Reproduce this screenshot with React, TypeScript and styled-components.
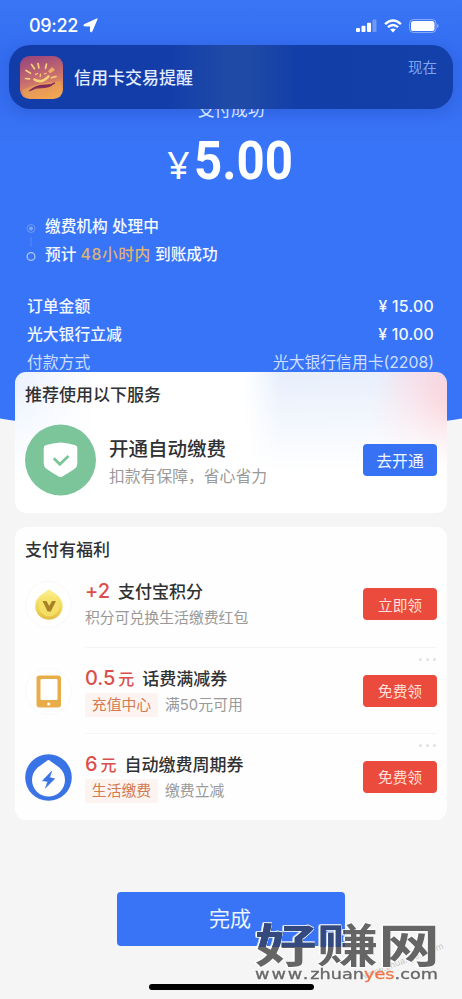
import React from "react";
import styled, { createGlobalStyle } from "styled-components";

const GlobalStyle = createGlobalStyle`
  * { box-sizing: border-box; }
  html, body { margin: 0; padding: 0; background: #f5f5f5; }
  body { font-family: Inter, "Noto Sans CJK SC", sans-serif; }
`;

const Screen = styled.main`
  position: relative;
  isolation: isolate;
  width: 462px;
  height: 999px;
  overflow: hidden;
  display: flex;
  flex-direction: column;
  background: #f5f5f5;
`;

const Backdrop = styled.div`
  position: absolute;
  z-index: -1;
  top: 0;
  left: -69px;
  width: 600px;
  height: 433px;
  background: linear-gradient(#3a75f6 0, #346df0 60px, #366ff2 110px, #3874f7 145px);
  border-radius: 0 0 50% 50% / 0 0 40px 40px;
`;

const StatusBar = styled.header`
  height: 45px;
  padding: 6px 22px 0 29px;
  display: flex;
  align-items: center;
  justify-content: space-between;
  color: #fff;
`;

const StatusGroup = styled.div<{ $gap: number }>`
  display: flex;
  align-items: center;
  gap: ${(p) => p.$gap}px;
`;

const Clock = styled.span`
  font-size: 18px;
  font-weight: 500;
  letter-spacing: -0.3px;
  line-height: 24px;
`;

const Notification = styled.section`
  height: 64px;
  margin: 0 9px;
  padding: 0 16px 0 11px;
  display: flex;
  align-items: center;
  border-radius: 21px;
  background: linear-gradient(90deg, #123ca8 0, #133eaa 36%, #1f4aa6 49%, #1f4aa6 54%, #123ea9 65%, #1440aa 100%);
  box-shadow: 0 3px 14px rgba(18, 50, 150, 0.22);
`;

const NotificationTitle = styled.strong`
  flex: 1;
  margin-left: 11px;
  padding-top: 1px;
  font-size: 17px;
  line-height: 24px;
  font-weight: 500;
  color: #e3edff;
`;

const NotificationTime = styled.time`
  align-self: flex-start;
  margin-top: 12px;
  font-size: 14.5px;
  line-height: 22px;
  color: #7fa4ee;
`;

const ResultClip = styled.div`
  height: 13px;
  overflow: hidden;
  display: flex;
  align-items: flex-end;
  justify-content: center;
  color: #d9e6ff;
  font-size: 16.7px;
  line-height: 24px;
`;

const Amount = styled.div`
  height: 80px;
  padding-top: 1px;
  display: flex;
  justify-content: center;
  align-items: baseline;
  gap: 4px;
  color: #fff;
`;

const Yen = styled.span`
  font: 400 39px/76px "Noto Sans", sans-serif;
`;

const AmountValue = styled.span`
  width: 101px;
  font: 700 53.5px/76px "DIN Alternate", Roboto, sans-serif;
  white-space: nowrap;
  transform: scaleX(0.92);
  transform-origin: 0 50%;
`;

const Steps = styled.ol`
  list-style: none;
  margin: 11px 0 0;
  padding: 0 0 0 26px;
  height: 80px;
`;

const Step = styled.li`
  display: flex;
  align-items: center;
  height: 28px;
  gap: 9px;
  font-size: 15.7px;
  line-height: 28px;
  font-weight: 500;
  color: #f4f8ff;
  white-space: pre;
`;

const StepText = styled.span``;

const Highlight = styled.span`
  color: #dfb273;
  letter-spacing: 0.6px;
`;

const Bill = styled.dl`
  margin: 0;
  padding: 0 28px 0 27px;
  height: 79px;
`;

const BillRow = styled.div<{ $light?: boolean }>`
  display: flex;
  justify-content: space-between;
  height: 28px;
  line-height: 28px;
  font-size: 15.8px;
  font-weight: ${(p) => (p.$light ? 400 : 500)};
  color: ${(p) => (p.$light ? "#cfdfff" : "#f2f7ff")};
`;

const BillLabel = styled.dt``;

const BillValue = styled.dd<{ $spaced: boolean }>`
  margin: 0;
  letter-spacing: ${(p) => (p.$spaced ? 0.25 : 0)}px;
`;

const Card = styled.section<{ $glow?: boolean }>`
  position: relative;
  margin: 0 15px 14px;
  padding: 10px 10px 0;
  height: ${(p) => (p.$glow ? 141 : 293)}px;
  border-radius: 11px;
  background: ${(p) =>
    p.$glow
      ? `linear-gradient(180deg, rgba(255,255,255,0) 0, #fff 100px),
         radial-gradient(ellipse 75px 105px at 100% 38px, #f8c6d0 0, rgba(250,215,225,0.75) 45%, rgba(255,255,255,0) 100%),
         linear-gradient(90deg, #e9f0ff 0, #fff 80px, #fff 230px, #e7effc 265px, #e9effb 100%)`
      : "#fefefe"};
`;

const CardTitle = styled.h2`
  margin: 0;
  padding-top: 0.5px;
  font-size: 17px;
  line-height: 24px;
  font-weight: 500;
  color: #303133;
`;

const ServiceRow = styled.div`
  margin-top: 17px;
  height: 73px;
  display: flex;
  align-items: center;
`;

const ServiceText = styled.div`
  flex: 1;
  margin-left: 13px;
  padding-top: 3px;
`;

const ServiceName = styled.div`
  font-size: 19.5px;
  line-height: 28px;
  font-weight: 500;
  color: #303133;
`;

const ServiceHint = styled.div`
  margin-top: 2px;
  font-size: 15.8px;
  line-height: 24px;
  color: #999;
`;

const ActionButton = styled.button<{ $tone: "blue" | "red" }>`
  flex: none;
  width: 74px;
  height: 32px;
  padding: 3px 0 0;
  border: 0;
  border-radius: 4px;
  font-family: inherit;
  font-size: ${(p) => (p.$tone === "blue" ? 15.8 : 14.7)}px;
  line-height: 24px;
  color: ${(p) => (p.$tone === "blue" ? "#f1f6ff" : "#ffe0dc")};
  background: ${(p) => (p.$tone === "blue" ? "#3672f3" : "#ea4b3c")};
`;

const OfferRow = styled.div`
  height: 86.4px;
  display: flex;
  align-items: center;
`;

const OfferBody = styled.div<{ $divided: boolean }>`
  flex: 1;
  height: 100%;
  margin-left: 13px;
  display: flex;
  align-items: center;
  border-bottom: 1px solid ${(p) => (p.$divided ? "#f5f5f5" : "transparent")};
`;

const OfferText = styled.div`
  flex: 1;
  padding-bottom: 1px;
`;

const OfferTitle = styled.div`
  display: flex;
  align-items: baseline;
  height: 29px;
  font-size: 17px;
  line-height: 28px;
  font-weight: 500;
  color: #303133;
`;

const Reward = styled.span`
  margin-right: 8px;
  color: #dc4e4b;
  font-size: 20px;
  letter-spacing: -0.1px;
`;

const RewardUnit = styled.span`
  margin-left: 3px;
  font-size: 16px;
`;

const OfferDetail = styled.div`
  display: flex;
  align-items: center;
  height: 24px;
  font-size: 14.85px;
  line-height: 24px;
  color: #999;
`;

const Tag = styled.span`
  width: 73px;
  margin-right: 7px;
  text-align: center;
  background: #fdf4f1;
  color: #d5794e;
`;

const OfferAction = styled.div`
  position: relative;
  display: flex;
`;

const MoreDots = styled.div`
  position: absolute;
  right: 1px;
  top: -17px;
  display: flex;
  gap: 4px;
`;

const Dot = styled.i`
  width: 3px;
  height: 3px;
  border-radius: 50%;
  background: #e2e2e2;
`;

const Footer = styled.footer`
  flex: 1;
  padding-top: 58px;
  display: flex;
  flex-direction: column;
  align-items: center;
`;

const DoneButton = styled.button`
  width: 228px;
  height: 54px;
  padding: 0 2px 4px 0;
  border: 0;
  border-radius: 4px;
  background: #3874f5;
  color: #ecf4ff;
  font: 400 21px/30px "Noto Sans CJK SC", sans-serif;
`;

const HomeIndicator = styled.div`
  margin-top: 38px;
  width: 165px;
  height: 5.5px;
  border-radius: 3px;
  background: #000;
`;

const Watermark = styled.div`
  position: absolute;
  left: 255px;
  top: 918px;
  width: 186px;
`;

const WatermarkName = styled.div`
  height: 49px;
  width: 138px;
  font: 700 46px/49px "Noto Sans CJK SC", sans-serif;
  transform: scaleX(1.34);
  transform-origin: 0 0;
  white-space: nowrap;
  filter: drop-shadow(0.7px 0 0 rgba(255, 255, 255, 0.8)) drop-shadow(-0.7px 0 0 rgba(255, 255, 255, 0.8))
    drop-shadow(0 1px 0 rgba(255, 255, 255, 0.8)) drop-shadow(0 -1px 0 rgba(255, 255, 255, 0.8));
`;

const WatermarkInk = styled.span`
  background: linear-gradient(#34497e, #34497e) 0 0 / 67.2px 38px no-repeat, #656565;
  -webkit-background-clip: text;
  background-clip: text;
  color: transparent;
`;

const WatermarkUrl = styled.div`
  margin-top: 1px;
  font: 400 13.4px/14px "DejaVu Sans", sans-serif;
  color: #686868;
  -webkit-text-stroke: 0.3px currentColor;
  transform: scaleX(1.32);
  transform-origin: 0 0;
  white-space: nowrap;
`;

const UrlPrefix = styled.span`
  letter-spacing: 1.5px;
`;

const Accent = styled.span`
  color: #f27445;
`;

const Stamp = styled.div`
  position: absolute;
  left: 360px;
  top: 956px;
  font-size: 9px;
  line-height: 10px;
  color: rgba(120, 120, 120, 0.4);
  transform: rotate(-21deg);
  white-space: nowrap;
`;

const LocationArrow = () => (
  <svg width="15" height="15" viewBox="0 0 15 15">
    <path d="M14.200.8 8.800 13.600Q8 14.600 7.500 13.400V7.900H1.300Q.2 7.300 1.300 6.600Z" fill="#fff" stroke="#fff" strokeWidth="1" strokeLinejoin="round" />
  </svg>
);

const Signal = () => (
  <svg width="21" height="14" viewBox="0 0 21 14" fill="#fff">
    <rect x="0" y="9" width="4" height="4" rx="1" />
    <rect x="5.5" y="6.8" width="4" height="6.2" rx="1" />
    <rect x="11" y="3.8" width="4" height="9.2" rx="1" />
    <rect x="16.5" y="0.5" width="4" height="12.5" rx="1" opacity=".28" />
  </svg>
);

const Wifi = () => (
  <svg width="18" height="14" viewBox="0 0 18 14" fill="none" stroke="#fff">
    <path d="M1.1 5.1Q9-2.2 16.9 5.1" strokeWidth="2.5" />
    <path d="M3.9 8.2Q9 3.7 14.1 8.2" strokeWidth="2.3" />
    <path d="M6.2 10.6Q9 8.2 11.8 10.6L9 13.4Z" fill="#fff" stroke="none" />
  </svg>
);

const Battery = () => (
  <svg width="31" height="14" viewBox="0 0 31 14">
    <rect x=".5" y=".5" width="26.5" height="13" rx="4" fill="none" stroke="#fff" opacity=".4" />
    <rect x="2" y="2" width="23.5" height="10" rx="2.6" fill="#fff" />
    <path d="M28.2 5v4q1.300-.6 1.300-2t-1.300-2Z" fill="#fff" opacity=".5" />
  </svg>
);

const BankLogo = () => (
  <svg width="43" height="43" viewBox="0 0 43 43">
    <defs>
      <linearGradient id="bank" x1=".3" y1="0" x2=".6" y2="1">
        <stop offset="0" stopColor="#9a477c" />
        <stop offset=".5" stopColor="#c66b70" />
        <stop offset="1" stopColor="#f3a651" />
      </linearGradient>
    </defs>
    <rect width="43" height="43" rx="9.500" fill="url(#bank)" />
    <path d="M2 34q15-8 39-9v9q-1 8-9 8H11q-7 0-9-8Z" fill="#eca552" opacity=".6" />
    <g fill="none" stroke="#f8d178" strokeLinecap="round" strokeWidth="1.700">
      <path d="m5.500 22.500 4 .4M6 14.500l4.500 2.800M11.500 8.500l3 4.300M18 7.500l.9 4.500M26.500 8l-1 4.300M36 20.500l-4.500 1.300" />
      <path d="M14.500 23.500q7 4.500 14-3.200" strokeWidth="2.500" />
      <path d="m15.500 18.500 2-1M20.500 18l-.4 2.600M24.300 18l1.800-.8" strokeWidth="1.200" />
    </g>
    <path d="m28 15 4-4 3 3-5 3.500Z" fill="#edae62" />
    <path d="M9.500 34.800q6.500-5.800 15.200-5.700 6 .3 10.300-2.300-5 5-11.700 4.800Q16 31 9.500 34.800Z" fill="#7d295c" stroke="#7d295c" />
  </svg>
);

const StepMark = ({ current = false }: { current?: boolean }) => (
  <svg width="10" height="28" viewBox="0 0 10 28" fill="none" stroke="#a9c5fd">
    {current ? (
      <>
        <circle cx="5" cy="15.5" r="4" strokeOpacity=".45" />
        <circle cx="5" cy="15.5" r="2" fill="#a9c5fd" stroke="none" opacity=".65" />
        <path d="M5 24v4" strokeOpacity=".3" />
      </>
    ) : (
      <>
        <path d="M5 0v6" strokeOpacity=".3" />
        <circle cx="5" cy="15.5" r="3.900" strokeWidth="1.300" />
      </>
    )}
  </svg>
);

const ShieldIcon = () => (
  <svg width="71" height="72" viewBox="0 0 71 72">
    <circle cx="35.500" cy="36" r="35.500" fill="#7cc59b" />
    <path d="M35.500 18.500q8 .8 14.800 2.800 2 .7 2 2.800V39.500q0 3.500-3 5.600-5 3.600-12 7.300-1.800 1-3.600 0-7-3.700-12-7.300-3-2.100-3-5.600V24.100q0-2.100 2-2.800Q27.500 19.300 35.500 18.500Z" fill="#fff" />
    <path d="m28.800 34.300 6 6 8.700-8.300" fill="none" stroke="#7cc59b" strokeWidth="2.800" />
  </svg>
);

const PointsIcon = () => (
  <svg width="47" height="47" viewBox="0 0 47 47">
    <defs>
      <linearGradient id="coin" x1="0" y1="0" x2="0" y2="1">
        <stop offset="0" stopColor="#fbf194" />
        <stop offset=".6" stopColor="#f1d856" />
        <stop offset="1" stopColor="#e3bd48" />
      </linearGradient>
    </defs>
    <circle cx="23.500" cy="23.500" r="22.800" fill="#fff" stroke="#f8f8f8" />
    <path d="M24 8.500q1 0 2.200 1.200l6 4.300Q37.600 18.500 37.600 25a13.700 13.700 0 0 1-27.400 0q0-6.500 5.600-11l6-4.300Q23 8.500 24 8.500Z" fill="url(#coin)" />
    <circle cx="24" cy="25" r="10.300" fill="#f6e36c" opacity=".8" />
    <path d="m17.500 20h4l2.700 5 2.800-5h4l-5.200 10.500h-3.200Z" fill="#a98227" />
  </svg>
);

const PhoneIcon = () => (
  <svg width="47" height="47" viewBox="0 0 47 47">
    <circle cx="23.500" cy="23.500" r="22.800" fill="#fff" stroke="#f9f9f9" />
    <rect x="11.500" y="7.500" width="24.500" height="32" rx="3" fill="#e8ad49" />
    <rect x="15.500" y="11" width="17" height="21" rx="1" fill="#fff" />
    <circle cx="23.700" cy="36" r="1.600" fill="#fff" />
  </svg>
);

const EnergyIcon = () => (
  <svg width="47" height="47" viewBox="0 0 47 47">
    <circle cx="23.500" cy="23.500" r="23.300" fill="#3973e5" />
    <path d="M23.500 6q1.200 0 2.500 1.500l8 5.800Q40 18.500 40 26a16.500 16.500 0 0 1-33 0q0-7.500 6-12.700l8-5.800Q22.300 6 23.500 6Z" fill="#fff" />
    <path d="m26.800 17-9.300 9.700 5.300.8-2.400 6.500 9.300-9.200-5.100-1.300Z" fill="#3973e5" stroke="#3973e5" strokeWidth=".6" strokeLinejoin="round" />
  </svg>
);

type Offer = {
  icon: React.ReactNode;
  reward: string;
  unit?: string;
  title: string;
  tag?: string;
  detail: string;
  action: string;
};

const offers: Offer[] = [
  { icon: <PointsIcon />, reward: "+2", title: "支付宝积分", detail: "积分可兑换生活缴费红包", action: "立即领" },
  { icon: <PhoneIcon />, reward: "0.5", unit: "元", title: "话费满减券", tag: "充值中心", detail: "满50元可用", action: "免费领" },
  { icon: <EnergyIcon />, reward: "6", unit: "元", title: "自动缴费周期券", tag: "生活缴费", detail: "缴费立减", action: "免费领" },
];

const bill = [
  { label: "订单金额", value: "¥ 15.00" },
  { label: "光大银行立减", value: "¥ 10.00" },
  { label: "付款方式", value: "光大银行信用卡(2208)", light: true },
];

export default function App() {
  return (
    <Screen>
      <GlobalStyle />
      <Backdrop />
      <StatusBar>
        <StatusGroup $gap={5}>
          <Clock>09:22</Clock>
          <LocationArrow />
        </StatusGroup>
        <StatusGroup $gap={7}>
          <Signal />
          <Wifi />
          <Battery />
        </StatusGroup>
      </StatusBar>
      <Notification>
        <BankLogo />
        <NotificationTitle>信用卡交易提醒</NotificationTitle>
        <NotificationTime>现在</NotificationTime>
      </Notification>
      <ResultClip>支付成功</ResultClip>
      <Amount>
        <Yen>¥</Yen>
        <AmountValue>5.00</AmountValue>
      </Amount>
      <Steps>
        <Step>
          <StepMark current />
          <StepText>缴费机构 处理中</StepText>
        </Step>
        <Step>
          <StepMark />
          <StepText>
            预计 <Highlight>48小时内</Highlight> 到账成功
          </StepText>
        </Step>
      </Steps>
      <Bill>
        {bill.map((row) => (
          <BillRow key={row.label} $light={row.light}>
            <BillLabel>{row.label}</BillLabel>
            <BillValue $spaced={!row.light}>{row.value}</BillValue>
          </BillRow>
        ))}
      </Bill>
      <Card $glow>
        <CardTitle>推荐使用以下服务</CardTitle>
        <ServiceRow>
          <ShieldIcon />
          <ServiceText>
            <ServiceName>开通自动缴费</ServiceName>
            <ServiceHint>扣款有保障，省心省力</ServiceHint>
          </ServiceText>
          <ActionButton $tone="blue">去开通</ActionButton>
        </ServiceRow>
      </Card>
      <Card>
        <CardTitle>支付有福利</CardTitle>
        {offers.map((offer, index) => (
          <OfferRow key={offer.title}>
            {offer.icon}
            <OfferBody $divided={index < offers.length - 1}>
              <OfferText>
                <OfferTitle>
                  <Reward>
                    {offer.reward}
                    {offer.unit && <RewardUnit>{offer.unit}</RewardUnit>}
                  </Reward>
                  {offer.title}
                </OfferTitle>
                <OfferDetail>
                  {offer.tag && <Tag>{offer.tag}</Tag>}
                  {offer.detail}
                </OfferDetail>
              </OfferText>
              <OfferAction>
                {offer.tag && (
                  <MoreDots>
                    <Dot />
                    <Dot />
                    <Dot />
                  </MoreDots>
                )}
                <ActionButton $tone="red">{offer.action}</ActionButton>
              </OfferAction>
            </OfferBody>
          </OfferRow>
        ))}
      </Card>
      <Footer>
        <DoneButton>完成</DoneButton>
        <HomeIndicator />
      </Footer>
      <Stamp>www.zhuanyes.com</Stamp>
      <Watermark>
        <WatermarkName>
          <WatermarkInk>好赚网</WatermarkInk>
        </WatermarkName>
        <WatermarkUrl>
          <UrlPrefix>www.</UrlPrefix>zhuan<Accent>yes</Accent>.com
        </WatermarkUrl>
      </Watermark>
    </Screen>
  );
}
